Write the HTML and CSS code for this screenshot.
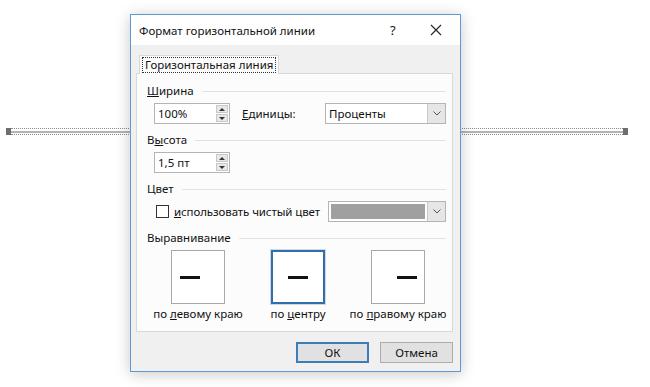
FILE: index.html
```html
<!DOCTYPE html>
<html lang="ru">
<head>
    <meta charset="UTF-8">
    <meta name="viewport" content="width=device-width, initial-scale=1.0">
    <title>Формат горизонтальной линии</title>
    <link rel="stylesheet" href="styles.css">
</head>
<body>
    <div class="page">
        <div class="hrule">
            <span class="handle"></span>
            <span class="rule-bar"><span class="rule-core"></span></span>
            <span class="handle"></span>
        </div>

        <div class="dialog">
            <div class="titlebar">
                <span class="title">Формат горизонтальной линии</span>
                <span class="help">?</span>
                <span class="close">
                    <svg width="12" height="12" viewBox="0 0 12 12">
                        <path d="M1 1 L11 11 M11 1 L1 11" stroke="#222" stroke-width="1.1" fill="none"/>
                    </svg>
                </span>
            </div>

            <div class="dialog-body">
                <div class="tabs">
                    <div class="tab"><span class="tab-label">Горизонтальная линия</span></div>
                </div>

                <div class="panel">
                    <div class="group-title first"><span><u>Ш</u>ирина</span></div>
                    <div class="row">
                        <div class="spin">
                            <span class="spin-value">100%</span>
                            <span class="spin-btns"><span class="up"></span><span class="down"></span></span>
                        </div>
                        <span class="units-label"><u>Е</u>диницы:</span>
                        <div class="select units">
                            <span class="select-value">Проценты</span>
                            <span class="select-btn"><svg width="8" height="5" viewBox="0 0 8 5"><path d="M0.5 0.5 L4 4 L7.5 0.5" stroke="#555" fill="none"/></svg></span>
                        </div>
                    </div>

                    <div class="group-title"><span>В<u>ы</u>сота</span></div>
                    <div class="row">
                        <div class="spin">
                            <span class="spin-value">1,5 пт</span>
                            <span class="spin-btns"><span class="up"></span><span class="down"></span></span>
                        </div>
                    </div>

                    <div class="group-title"><span>Цвет</span></div>
                    <div class="row">
                        <span class="checkbox"></span>
                        <span class="check-label"><u>и</u>спользовать чистый цвет</span>
                        <div class="select color">
                            <span class="swatch"></span>
                            <span class="select-btn"><svg width="8" height="5" viewBox="0 0 8 5"><path d="M0.5 0.5 L4 4 L7.5 0.5" stroke="#555" fill="none"/></svg></span>
                        </div>
                    </div>

                    <div class="group-title"><span>Выравнивание</span></div>
                    <div class="align-grid">
                        <div class="align-item">
                            <div class="align-box left"><span class="dash"></span></div>
                            <span class="align-label">по <u>л</u>евому краю</span>
                        </div>
                        <div class="align-item">
                            <div class="align-box center selected"><span class="dash"></span></div>
                            <span class="align-label">по <u>ц</u>ентру</span>
                        </div>
                        <div class="align-item">
                            <div class="align-box right"><span class="dash"></span></div>
                            <span class="align-label">по <u>п</u>равому краю</span>
                        </div>
                    </div>
                </div>

                <div class="buttons">
                    <button class="btn default">ОК</button>
                    <button class="btn">Отмена</button>
                </div>
            </div>
        </div>
    </div>
</body>
</html>
```

FILE: styles.css
```css
body {
    margin: 0;
    padding: 0;
    background: #fff;
    font-family: "Noto Sans", "Open Sans", sans-serif;
    font-size: 11.5px;
    color: #111;
}

.page {
    position: relative;
    width: 650px;
    height: 387px;
    overflow: hidden;
}

/* the selected horizontal line in the document */
.hrule {
    display: flex;
    align-items: center;
    margin: 128px 22px 0 6px;
    height: 7px;
}

.handle {
    width: 5px;
    height: 7px;
    background: #6e6e6e;
}

.rule-bar {
    flex: 1;
    height: 5px;
    border-top: 1px dotted #8a8a8a;
    border-bottom: 1px dotted #8a8a8a;
    display: flex;
    align-items: center;
}

.rule-core {
    flex: 1;
    height: 2px;
    background: #b4b4b4;
}

/* dialog window */
.dialog {
    position: absolute;
    left: 130px;
    top: 14px;
    width: 331px;
    height: 358px;
    box-sizing: border-box;
    border: 1px solid #5b9ad6;
    background: #f0f0f0;
    box-shadow: 0 2px 14px rgba(0, 0, 0, 0.22);
}

.titlebar {
    display: flex;
    align-items: center;
    height: 30px;
    background: #fff;
    padding-left: 8px;
}

.title {
    flex: 1;
    font-size: 11.5px;
}

.help {
    width: 20px;
    font-size: 13px;
    margin-right: 20px;
}

.close {
    width: 12px;
    height: 12px;
    margin-right: 18px;
    display: flex;
}

.dialog-body {
    padding: 10px 7px 0 5px;
}

.tabs {
    display: flex;
    padding-left: 3px;
    position: relative;
    z-index: 1;
}

.tab {
    height: 18px;
    padding: 0 2px;
    border: 1px solid #d9d9d9;
    border-bottom: none;
    background: #fcfcfc;
    display: flex;
    align-items: center;
}

.tab-label {
    border: 1px dotted #333;
    padding: 0 2px;
    line-height: 14px;
}

.panel {
    height: 259px;
    box-sizing: border-box;
    margin-top: -1px;
    border: 1px solid #d9d9d9;
    background: #fcfcfc;
    padding: 9px 6px 0 10px;
}

.group-title {
    display: flex;
    align-items: center;
    line-height: 16px;
    margin-top: 8px;
    margin-bottom: 4px;
}

.group-title.first {
    margin-top: 0;
}

.group-title::after {
    content: "";
    flex: 1;
    margin-left: 8px;
    border-top: 1px solid #e2e2e2;
}

.row {
    display: flex;
    align-items: center;
    height: 21px;
    padding-left: 7px;
}

.spin {
    width: 76px;
    height: 21px;
    box-sizing: border-box;
    border: 1px solid #b4b4b4;
    background: #fff;
    display: flex;
    align-items: center;
}

.spin-value {
    flex: 1;
    padding-left: 3px;
}

.spin-btns {
    width: 12px;
    height: 17px;
    margin-right: 1px;
    display: flex;
    flex-direction: column;
    gap: 1px;
}

.spin-btns span {
    flex: 1;
    background: #e8e8e8;
    border: 1px solid #c8c8c8;
    position: relative;
}

.spin-btns .up::after,
.spin-btns .down::after {
    content: "";
    position: absolute;
    left: 2px;
    top: 2px;
    border-left: 3px solid transparent;
    border-right: 3px solid transparent;
}

.spin-btns .up::after {
    border-bottom: 3px solid #333;
}

.spin-btns .down::after {
    border-top: 3px solid #333;
}

.units-label {
    margin-left: 12px;
    width: 83px;
}

.select {
    height: 21px;
    box-sizing: border-box;
    border: 1px solid #b4b4b4;
    background: #fff;
    display: flex;
    align-items: center;
}

.select.units {
    width: 121px;
}

.select.color {
    width: 118px;
    margin-left: auto;
    flex-shrink: 0;
}

.select-value {
    flex: 1;
    padding-left: 3px;
}

.select-btn {
    width: 17px;
    height: 19px;
    margin-left: auto;
    background: #e6e6e6;
    border-left: 1px solid #c8c8c8;
    display: flex;
    align-items: center;
    justify-content: center;
}

.swatch {
    flex: 1;
    height: 15px;
    margin: 0 2px;
    background: #a0a0a0;
}

.checkbox {
    width: 11px;
    height: 11px;
    flex-shrink: 0;
    margin-left: 2px;
    border: 1px solid #333;
    background: #fff;
}

.check-label {
    margin-left: 5px;
    white-space: nowrap;
    letter-spacing: -0.1px;
}

.align-grid {
    display: grid;
    grid-template-columns: 100px 100px 100px;
    padding-left: 1px;
}

.align-item {
    display: flex;
    flex-direction: column;
    align-items: center;
}

.align-box {
    width: 54px;
    height: 54px;
    box-sizing: border-box;
    border: 1px solid #a8a8a8;
    background: #fff;
    display: flex;
    align-items: center;
}

.align-box.left {
    justify-content: flex-start;
    padding-left: 8px;
}

.align-box.center {
    justify-content: center;
}

.align-box.right {
    justify-content: flex-end;
    padding-right: 7px;
}

.align-box.selected {
    border: 2px solid #2f6fae;
    outline: 1px solid #cfd8e0;
}

.dash {
    width: 20px;
    height: 3px;
    background: #111;
}

.align-label {
    margin-top: 2px;
    line-height: 16px;
    white-space: nowrap;
}

.buttons {
    display: flex;
    justify-content: flex-end;
    gap: 11px;
    margin-top: 10px;
}

.btn {
    width: 73px;
    height: 21px;
    box-sizing: border-box;
    border: 1px solid #adadad;
    background: #e1e1e1;
    font-family: inherit;
    font-size: 11.5px;
    color: #111;
    padding: 0;
}

.btn.default {
    border: 2px solid #3b7db8;
}
```
